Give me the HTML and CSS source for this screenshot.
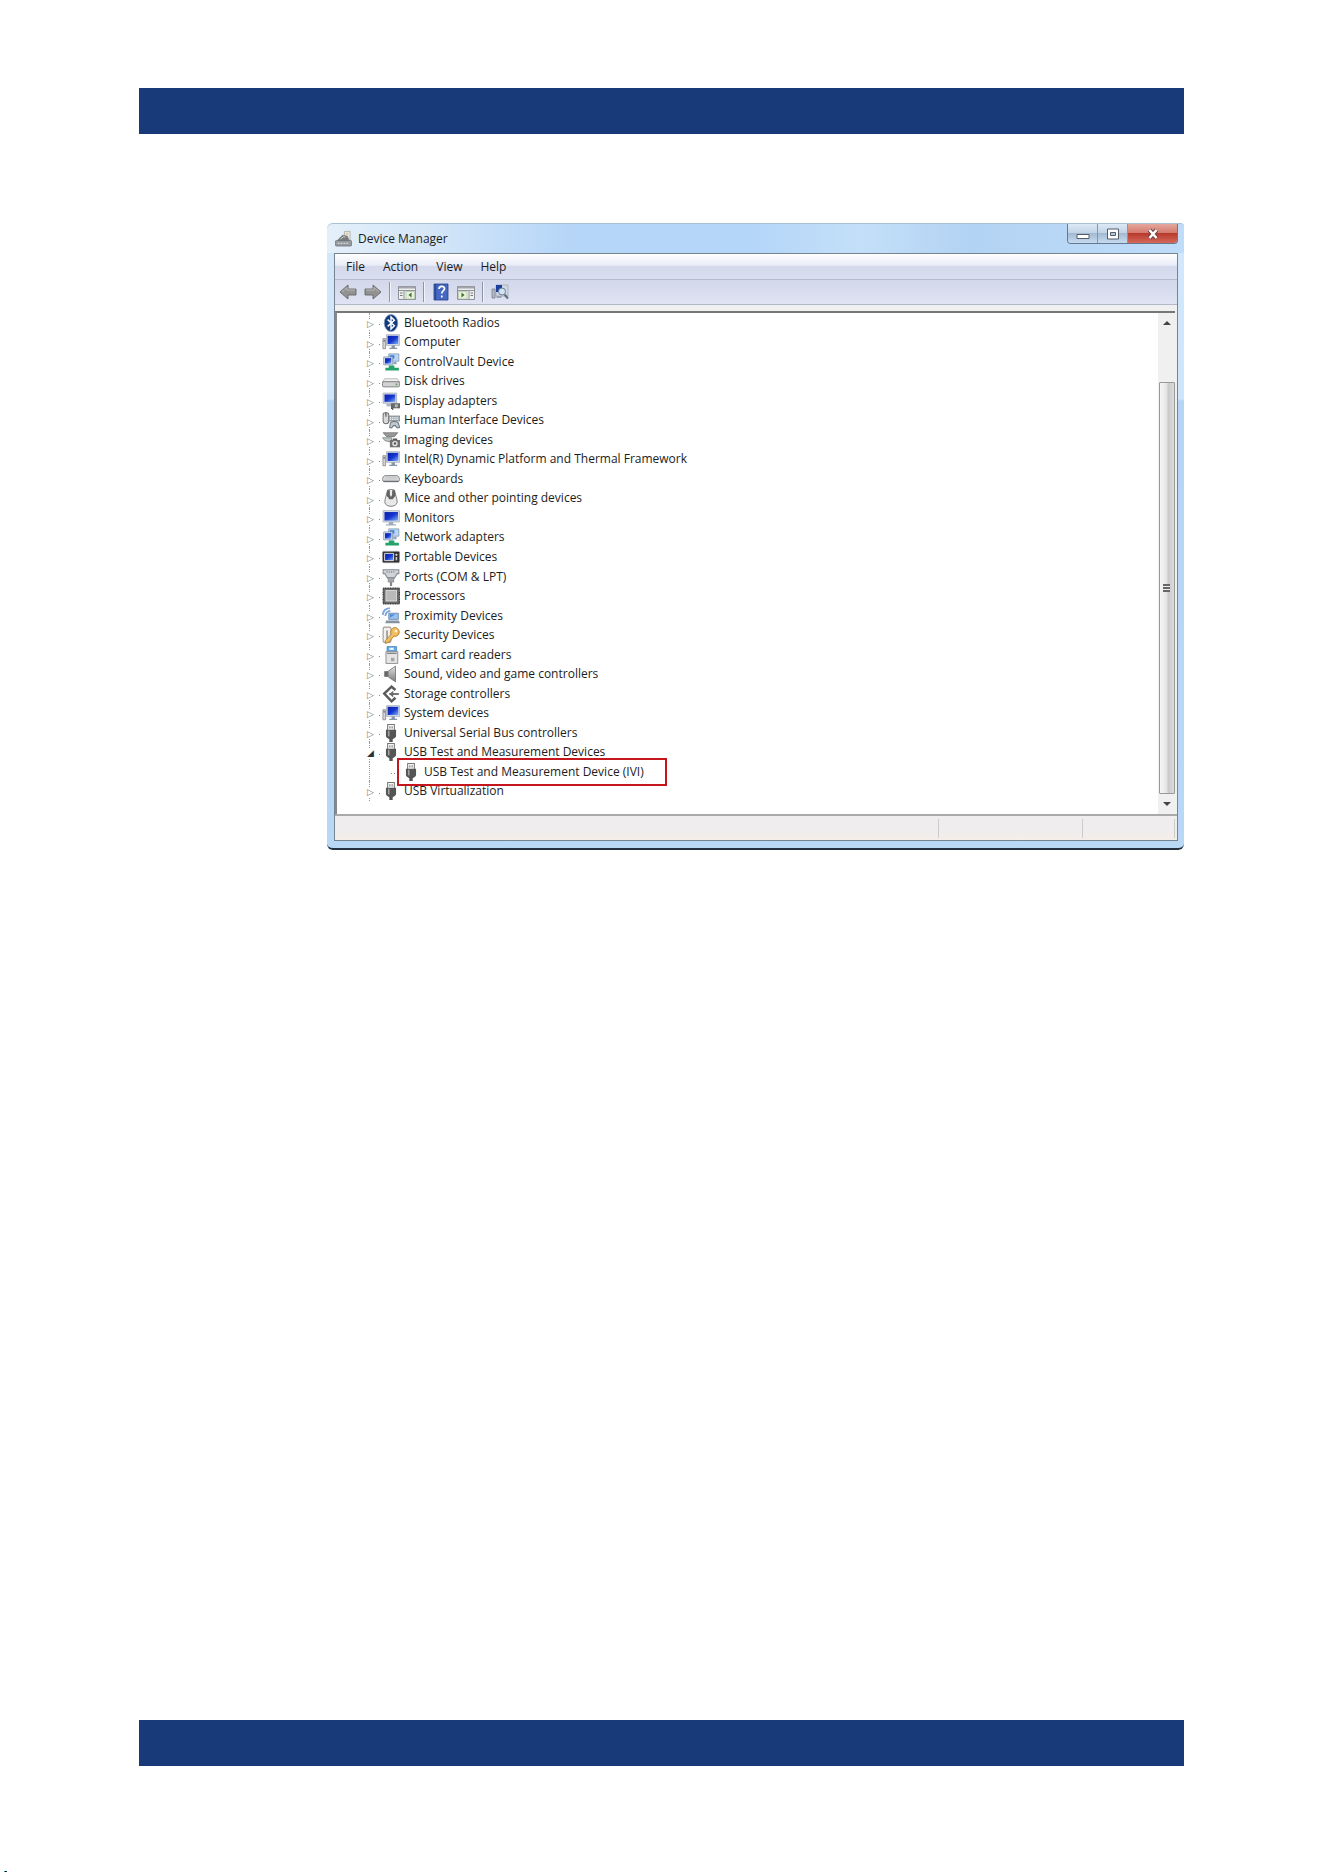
FILE: index.html
```html
<!DOCTYPE html>
<html lang="en">
  <head>
    <meta charset="UTF-8" />
    <meta name="viewport" content="width=device-width, initial-scale=1.0" />
    <title>Device Manager</title>
    <link rel="stylesheet" href="styles.css">
  </head>
  <body>
    <!-- Icon set -->
    <svg class="icon-set" aria-hidden="true">
      <defs>
        <linearGradient id="blueScreen" x1="0" y1="0" x2="1" y2="1">
          <stop offset="0" stop-color="#0a1fa8" />
          <stop offset="0.5" stop-color="#1534cf" />
          <stop offset="1" stop-color="#7fb2f2" />
        </linearGradient>
        <linearGradient id="grey" x1="0" y1="0" x2="0" y2="1">
          <stop offset="0" stop-color="#e0e0e0" />
          <stop offset="1" stop-color="#7c7c7c" />
        </linearGradient>
      </defs>
      <symbol id="bluetooth" viewBox="0 0 16 16">
        <ellipse cx="8" cy="8" rx="6" ry="7.6" fill="#123a80" stroke="#7d93b8" stroke-width="0.6" />
        <path d="M5 5l6 5.5L8 13.4V2.6l3 2.9L5 11" fill="none" stroke="#fff" stroke-width="1.3" />
      </symbol>
      <symbol id="computer" viewBox="0 0 16 16">
        <path d="M0.8 5h2.4v9H0.8z" fill="#d4d4d4" stroke="#777" stroke-width="0.6" />
        <path d="M1.3 7h1.4" stroke="#555" />
        <path d="M4 1.5h11.5v9.5H4z" fill="#d7dde6" stroke="#a4adba" stroke-width="0.7" />
        <path d="M5 2.5h9.5v7.3H5z" fill="url(#blueScreen)" />
        <path d="M8.5 11h3v2h2v1.2H6.5V13h2z" fill="#8796a8" />
      </symbol>
      <symbol id="network" viewBox="0 0 16 16">
        <path d="M6 0.8h9v6.5H6z" fill="#b9d7f4" stroke="#8095ac" stroke-width="0.7" />
        <path d="M7 2h4v3H7z" fill="#3b7fd8" />
        <path d="M1.5 3.5h8v7h-8z" fill="#d4e2f1" stroke="#8093ab" stroke-width="0.7" />
        <path d="M2.7 4.6h5.6v4.8H2.7z" fill="url(#blueScreen)" />
        <path d="M10 8h3v2h-3z" fill="#91a4b8" />
        <path d="M6 11h5v2h4v2.5H3V13h3z" fill="#25a267" />
      </symbol>
      <symbol id="disk" viewBox="0 0 16 16">
        <path d="M2.5 6h11l2.3 3H0.2z" fill="#f2f2f2" stroke="#9b9b9b" stroke-width="0.6" />
        <rect x="0.4" y="8.6" width="15.3" height="4.6" rx="1.4" fill="#d2d2d2" stroke="#777" stroke-width="0.8" />
        <path d="M12 10.2h1.8v1.6H12z" fill="#6ea56a" />
      </symbol>
      <symbol id="display" viewBox="0 0 16 16">
        <path d="M1 1h12v9H1z" fill="#d7dde6" stroke="#9ba6b5" stroke-width="0.7" />
        <path d="M2.2 2.2h9.6v6.6H2.2z" fill="url(#blueScreen)" />
        <path d="M4 10.5h5v2.3H4z" fill="#a9b5c4" />
        <path d="M8 10h8v4.5H8z" fill="#666b66" />
        <circle cx="12.7" cy="12.2" r="1.5" fill="#b5b8b5" />
        <path d="M8 14.5h1.5V16" stroke="#555" fill="none" />
      </symbol>
      <symbol id="hid" viewBox="0 0 16 16">
        <path d="M1 3c0-2 5-2 5 0v6c0 3-5 3-5 0z" fill="#d9d9d9" stroke="#6e6e6e" stroke-width="0.9" />
        <path d="M3.5 1v4" stroke="#555" />
        <path d="M6 4.5h10v4.3H6z" fill="#aeb7bf" stroke="#777" stroke-width="0.7" />
        <path d="M7 6h8M7 7.5h8" stroke="#f4f4f4" stroke-dasharray="1 1" />
        <path d="M7.5 10.5c1.5-1.5 5.5-1.5 7 0l1.2 4.2-2.2.3-1.7-2h-1.6l-1.6 2-1.8-.3z" fill="#c1c8ce" stroke="#697783" stroke-width="0.9" />
      </symbol>
      <symbol id="imaging" viewBox="0 0 16 16">
        <path d="M1 1.5h13L11 5H4z" fill="#989898" stroke="#676767" stroke-width="0.6" />
        <path d="M0.5 6h8v4L2.6 8.6z" fill="#c1c8c8" stroke="#7b8181" stroke-width="0.7" />
        <path d="M7 8h9v6.5H7z" fill="#727272" />
        <path d="M9.5 6.7h4V8h-4z" fill="#555" />
        <circle cx="11.5" cy="11.2" r="2.4" fill="#e7e7e7" />
        <circle cx="11.5" cy="11.2" r="1.1" fill="#555" />
      </symbol>
      <symbol id="keyboard" viewBox="0 0 16 16">
        <path d="M2.7 5h10.6c1 0 2.2 1.8 2.2 3.4 0 1.2-.6 2-1.5 2H2c-.9 0-1.5-.8-1.5-2C.5 6.8 1.7 5 2.7 5z" fill="#dedede" stroke="#76797c" stroke-width="0.8" />
        <path d="M3 6.5h10M2.3 8h11.4" stroke="#b9bdc2" stroke-width="0.7" />
        <path d="M1.2 10h13.6" stroke="#63676b" />
      </symbol>
      <symbol id="mouse" viewBox="0 0 16 16">
        <path d="M5 1c1.5-1 4.5-1 6 0 .5 3 2.5 7 2.5 11-1 4.500-10 4.500-11 0C2.500 8 4.500 4 5 1z" fill="#e8e8e8" stroke="#777" stroke-width="0.8" />
        <path d="M4.500 1h2.500v4l1 2 1-2V1h2.500l.5 5-2.500 3H6.500L4 6z" fill="#636363" />
        <path d="M8 1.500v4M5 7.500l-1 4" stroke="#eee" stroke-width="1.3" />
      </symbol>
      <symbol id="monitor" viewBox="0 0 16 16">
        <path d="M1 1.5h14.5v10H1z" fill="#d7dde6" stroke="#a4adba" stroke-width="0.7" />
        <path d="M2.2 2.7h12v7.6h-12z" fill="url(#blueScreen)" />
        <path d="M6 11.5h4v2h2.5v1.2h-9v-1.2H6z" fill="#a0acba" />
      </symbol>
      <symbol id="portable" viewBox="0 0 16 16">
        <rect x="0.5" y="3" width="15" height="10" rx="1" fill="#303030" stroke="#8c8c8c" stroke-width="0.7" />
        <path d="M2.3 4.8h8v6.4h-8z" fill="url(#blueScreen)" stroke="#e5e5e5" stroke-width="0.8" />
        <circle cx="12.8" cy="6" r="1" fill="#ddd" />
        <path d="M12.8 8v3" stroke="#c8c8c8" stroke-width="1.5" />
      </symbol>
      <symbol id="port" viewBox="0 0 16 16">
        <path d="M1 1.5h14v3.5h-1.5L11 9H5L2.5 5H1z" fill="#d0d4d8" stroke="#83888e" stroke-width="0.9" />
        <path d="M4 3.5h8" stroke="#666" stroke-dasharray="1 1" />
        <path d="M5.5 8.5h5v4h-5z" fill="#a4a8ad" stroke="#777" stroke-width="0.5" />
        <path d="M8 12.5V16" stroke="#888" stroke-width="2" />
      </symbol>
      <symbol id="processor" viewBox="0 0 16 16">
        <rect x="1" y="1" width="14.5" height="14" fill="#696969" stroke="#333" stroke-dasharray="1 .5" />
        <rect x="3.5" y="3" width="9.5" height="9.5" fill="#b9b9b9" stroke="#e4e4e4" stroke-width="0.7" />
      </symbol>
      <symbol id="proximity" viewBox="0 0 16 16">
        <path d="M.8 7C1 3.5 3.5 1.2 7 1M3 8c.2-2.600 1.800-4.200 4.400-4.500" fill="none" stroke="#7ba5dc" stroke-width="1.6" />
        <path d="M6 5.5h8.5V11H6z" fill="#98c1ef" stroke="#718aaa" stroke-width="0.8" />
        <path d="M7 6.5h5L7 9.5z" fill="#4c8ade" />
        <path d="M3.5 12H15l1 2.5H3z" fill="#8793a1" />
      </symbol>
      <symbol id="security" viewBox="0 0 16 16">
        <rect x="1" y="1" width="7" height="13.5" rx="1.5" fill="#f4f1ed" stroke="#a59c92" />
        <path d="M4.5 4v8" stroke="#999" stroke-width="1.5" />
        <path d="M9.5 2c3-2 7 1.500 5.500 5-.8 2-3 2.500-4.500 2L6 14.500 3 15.500V13L8 7.500C7.500 5 8 3 9.500 2z" fill="#f1bf62" stroke="#b57a26" stroke-width="0.8" />
        <circle cx="12.5" cy="4.5" r="1.2" fill="#fff4da" />
      </symbol>
      <symbol id="smartcard" viewBox="0 0 16 16">
        <path d="M4.5.5H13v6H4.500z" fill="#5fa7e2" stroke="#4a83b8" stroke-width="0.7" />
        <path d="M6.5 1.5h4v2h-4z" fill="#e5f3ff" />
        <path d="M3.5 5H14v10.5H3.500z" fill="#e5e5e5" stroke="#898989" stroke-width="0.8" />
        <path d="M8 10.5h3v3H8z" fill="#a5a5a5" />
        <path d="M4.5 6.5H13" stroke="#777" />
      </symbol>
      <symbol id="sound" viewBox="0 0 16 16">
        <path d="M2 5.5h3.5v5H2z" fill="#686868" />
        <path d="M5.5 5.5L12 1v14l-6.500-4.500z" fill="url(#grey)" stroke="#7b7b7b" stroke-width="0.8" />
      </symbol>
      <symbol id="storage" viewBox="0 0 16 16">
        <path d="M12 4.5L8.5 1.5 2 7.7 8.5 14.5l3.500-3.200" fill="none" stroke="#5b5b5b" stroke-width="2.2" />
        <path d="M6.5 8H15" stroke="#777" stroke-width="1.8" />
        <path d="M10 5L6.5 8 10 11z" fill="#696969" />
      </symbol>
      <symbol id="usb" viewBox="0 0 16 16">
        <path d="M5 .5h6V6H5z" fill="#f6f6f6" stroke="#777" stroke-width="0.9" />
        <path d="M7 2v2M9 2v2" stroke="#666" stroke-width="0.8" />
        <path d="M3.500 5h9v5.500c0 1.500-1.500 2.500-3 3V16h-3v-2.500c-1.500-.5-3-1.500-3-3z" fill="#555" />
        <path d="M6 6v5" stroke="#a2a2a2" stroke-width="1.400" />
      </symbol>
      <symbol id="manager" viewBox="0 0 18 18">
        <path d="M10 1h6v11h-6z" fill="#e6e6df" stroke="#a9a9a0" stroke-width="0.8" />
        <circle cx="12.8" cy="3.5" r="1.2" fill="#d9c88a" />
        <path d="M4 9l4-4 5 1 2 5H3z" fill="#7c7c7c" stroke="#5f5f5f" stroke-width="0.6" />
        <path d="M6 9l3-2.5 2 .5" fill="none" stroke="#d8d8d8" />
        <rect x="0.5" y="10.5" width="17" height="6" rx="1" fill="#969ba0" stroke="#676b70" stroke-width="0.7" />
        <path d="M3 13.5h12" stroke="#e4e4e4" stroke-dasharray="2 1" />
      </symbol>
      <symbol id="arrow" viewBox="0 0 18 18">
        <path d="M1 9l8-7v4h8v6H9v4z" fill="#929292" stroke="#686868" stroke-width="0.9" />
        <path d="M3 9l5-4.500V7h8" fill="none" stroke="#b9b9b9" />
      </symbol>
      <symbol id="pane" viewBox="0 0 18 18">
        <path d="M.5 3.5h17v13H.5z" fill="#eef0f0" stroke="#8e9197" />
        <path d="M1 4.5h16" stroke="#a3a5ab" stroke-width="2" />
        <path d="M1 7.5h16M6 8v8" stroke="#8e9197" />
        <path d="M2 10h2.5M2 12.5h2.5" stroke="#777" />
        <path d="M8 8.5h8.5V16H8z" fill="#e4f2d7" stroke="#a9b79f" stroke-width="0.6" />
        <path d="M13.5 9.5v5L10.5 12z" fill="#416b35" />
      </symbol>
      <symbol id="help" viewBox="0 0 18 18">
        <path d="M2 1h14v16H2z" fill="#4569c2" stroke="#263d86" stroke-width="0.8" />
        <path d="M3.5 1v16" stroke="#2d489b" stroke-width="1.5" />
        <path d="M7 6c0-3.500 5.500-3.500 5.500-.3 0 2-2.700 2-2.700 4.800M9.800 12.500v2" fill="none" stroke="#fff" stroke-width="1.7" />
      </symbol>
      <symbol id="scan" viewBox="0 0 18 18">
        <path d="M5 2h12v11H5z" fill="#d2d8e2" stroke="#a2a8b4" stroke-width="0.8" />
        <path d="M5 2h6v7H5z" fill="#1b3e9c" />
        <path d="M1 6h3v9H1z" fill="#b5bbc5" stroke="#777f8b" stroke-width="0.8" />
        <circle cx="11" cy="8.5" r="3.5" fill="#cfe2f3" stroke="#6e7f95" />
        <path d="M13.5 11.5l3.5 4" stroke="#66707d" stroke-width="2.2" />
        <path d="M5.5 14h5" stroke="#8992a0" stroke-width="1.5" />
      </symbol>
    </svg>

    <header class="band"></header>

    <main class="window">
      <div class="titlebar">
        <svg class="title-icon"><use href="#manager" /></svg>
        <h1>Device Manager</h1>
        <div class="window-buttons">
          <button class="minimize" aria-label="Minimize"><svg viewBox="0 0 14 14"><path d="M1 7.500h12v4H1z" fill="#fff" stroke="#555c68" /></svg></button>
          <button class="maximize" aria-label="Maximize"><svg viewBox="0 0 14 14"><path d="M1.500 2h11v10h-11z" fill="#fff" stroke="#555c68" /><path d="M4.500 5.500h5v3h-5z" fill="#b6c8de" stroke="#555c68" /></svg></button>
          <button class="close" aria-label="Close"><svg viewBox="0 0 14 14"><path d="M3.500 3l7 8M10.500 3l-7 8" stroke="#6d4446" stroke-width="4.500" /><path d="M3.500 3l7 8M10.500 3l-7 8" stroke="#fff" stroke-width="2.500" /></svg></button>
        </div>
      </div>

      <div class="content">
        <nav class="menu">
          <button>File</button>
          <button>Action</button>
          <button>View</button>
          <button>Help</button>
        </nav>
        <div class="toolbar">
          <button aria-label="Back"><svg><use href="#arrow" /></svg></button>
          <button class="flip" aria-label="Forward"><svg><use href="#arrow" /></svg></button>
          <span class="separator"></span>
          <button aria-label="Show console tree"><svg><use href="#pane" /></svg></button>
          <span class="separator"></span>
          <button aria-label="Help"><svg><use href="#help" /></svg></button>
          <button class="flip" aria-label="Show action pane"><svg><use href="#pane" /></svg></button>
          <span class="separator"></span>
          <button aria-label="Scan for hardware changes"><svg><use href="#scan" /></svg></button>
        </div>

        <div class="panel">
          <ul class="tree">
            <li><svg class="icon"><use href="#bluetooth" /></svg>Bluetooth Radios</li>
            <li><svg class="icon"><use href="#computer" /></svg>Computer</li>
            <li><svg class="icon"><use href="#network" /></svg>ControlVault Device</li>
            <li><svg class="icon"><use href="#disk" /></svg>Disk drives</li>
            <li><svg class="icon"><use href="#display" /></svg>Display adapters</li>
            <li><svg class="icon"><use href="#hid" /></svg>Human Interface Devices</li>
            <li><svg class="icon"><use href="#imaging" /></svg>Imaging devices</li>
            <li><svg class="icon"><use href="#computer" /></svg>Intel(R) Dynamic Platform and Thermal Framework</li>
            <li><svg class="icon"><use href="#keyboard" /></svg>Keyboards</li>
            <li><svg class="icon"><use href="#mouse" /></svg>Mice and other pointing devices</li>
            <li><svg class="icon"><use href="#monitor" /></svg>Monitors</li>
            <li><svg class="icon"><use href="#network" /></svg>Network adapters</li>
            <li><svg class="icon"><use href="#portable" /></svg>Portable Devices</li>
            <li><svg class="icon"><use href="#port" /></svg>Ports (COM &amp; LPT)</li>
            <li><svg class="icon"><use href="#processor" /></svg>Processors</li>
            <li><svg class="icon"><use href="#proximity" /></svg>Proximity Devices</li>
            <li><svg class="icon"><use href="#security" /></svg>Security Devices</li>
            <li><svg class="icon"><use href="#smartcard" /></svg>Smart card readers</li>
            <li><svg class="icon"><use href="#sound" /></svg>Sound, video and game controllers</li>
            <li><svg class="icon"><use href="#storage" /></svg>Storage controllers</li>
            <li><svg class="icon"><use href="#computer" /></svg>System devices</li>
            <li><svg class="icon"><use href="#usb" /></svg>Universal Serial Bus controllers</li>
            <li class="open"><svg class="icon"><use href="#usb" /></svg>USB Test and Measurement Devices</li>
            <li class="child"><span class="marked"><svg class="icon"><use href="#usb" /></svg>USB Test and Measurement Device (IVI)</span></li>
            <li><svg class="icon"><use href="#usb" /></svg>USB Virtualization</li>
          </ul>
          <div class="scrollbar">
            <button class="up" aria-label="Scroll up"></button>
            <div class="thumb"><span class="grip"></span></div>
            <button class="down" aria-label="Scroll down"></button>
          </div>
        </div>

        <div class="status">
          <span class="cell-main"></span>
          <span class="cell-mid"></span>
          <span class="cell-end"></span>
        </div>
      </div>
    </main>

    <footer class="band"></footer>
    <span class="page-mark"></span>
  </body>
</html>
```

FILE: styles.css
```css
/* General styles */
*,
*::before,
*::after {
  box-sizing: border-box;
}

body {
  font-family: "Open Sans", "Noto Sans", sans-serif;
  font-size: 12px;
  line-height: 18px;
  color: #1c1c1c;
  background-color: #fff;
  margin: 0;
  padding: 88px 140px 106px 139px;
  min-height: 100vh;
  display: flex;
  flex-direction: column;
  position: relative;
}

button {
  font: inherit;
  color: inherit;
  background: none;
  border: none;
  padding: 0;
  display: flex;
  align-items: center;
  justify-content: center;
}

.icon-set {
  position: absolute;
  width: 0;
  height: 0;
}

.band {
  height: 46px;
  flex: none;
  background-color: #183a78;
}

footer.band {
  margin-top: auto;
}

/* small print mark on the sheet edge */
.page-mark {
  position: absolute;
  left: 4px;
  bottom: 0;
  width: 3px;
  height: 1px;
  background: linear-gradient(90deg, #2a9a70 33%, #000 33% 66%, #1a1a80 66%);
}

/* Window frame */
.window {
  margin: 89px 0 0 188px;
  padding: 0 6px 7px 7px;
  border-bottom: 2px solid #23303f;
  border-radius: 6px 4px 6px 6px;
  background: linear-gradient(#d3e8fb 0, #cfe5fb 176px, #b4d5f6 178px, #b9d8f6 100%);
}

.titlebar {
  height: 30px;
  margin: 0 -6px 0 -7px;
  padding: 0 6px 0 8px;
  display: flex;
  align-items: center;
  gap: 6px;
  border-top: 1px solid #a9bfd6;
  border-radius: 6px 4px 0 0;
  background: linear-gradient(90deg, #e4eff9 0, #d4e6f8 12%, #b6d6f8 28%, #b4d6f9 50%, #c4dff8 62%, #b3d3f4 75%, #bfddf9 100%);
}

.title-icon {
  width: 17px;
  height: 18px;
}

h1 {
  margin: 0;
  font-size: 12px;
  font-weight: normal;
}

.window-buttons {
  margin-left: auto;
  align-self: flex-start;
  display: flex;
  height: 20px;
  border: 1px solid #66788d;
  border-top: none;
  border-radius: 0 0 4px 4px;
  overflow: hidden;
}

.window-buttons button {
  width: 30px;
  border-right: 1px solid #8396aa;
  background: linear-gradient(#dce9f6 0, #c3d4e6 45%, #a4bad2 50%, #c5dbf0 100%);
}

.window-buttons svg {
  width: 14px;
  height: 14px;
}

.window-buttons .close {
  width: 49px;
  border-right: none;
  background: linear-gradient(#e5a79d 0, #d57c70 45%, #b83a2d 50%, #d5695a 100%);
}

.content {
  border: 1px solid #77838f;
  background-color: #f0f0f0;
}

.menu {
  height: 26px;
  padding-left: 11px;
  display: flex;
  gap: 18px;
  border-bottom: 1px solid #b5bccb;
  background: linear-gradient(#fff 0, #e9ecf7 45%, #d3d8eb 50%, #dadff0 100%);
}

/* Toolbar */
.toolbar {
  height: 25px;
  padding-left: 4px;
  display: flex;
  align-items: center;
  gap: 7px;
  border-bottom: 1px solid #b2b8c6;
  background: linear-gradient(#d2d8e9, #dfe3f4);
}

.toolbar svg {
  width: 18px;
  height: 18px;
}

.toolbar .separator {
  width: 2px;
  height: 20px;
  border-left: 1px solid #8c95a6;
  border-right: 1px solid #f2f4fa;
}

.flip svg {
  transform: scaleX(-1);
}

/* Device tree */
.panel {
  margin: 6px 2px 0 0;
  border-top: 2px solid #777;
  border-left: 2px solid #888;
  background-color: #fff;
  display: flex;
}

.tree {
  list-style: none;
  margin: 0;
  padding: 0 0 13px 32px;
  flex: 1;
  display: grid;
  grid-auto-rows: 1fr;
  height: 501px;
}

.tree li {
  display: flex;
  align-items: center;
  gap: 4px;
  position: relative;
  padding-left: 13px;
  white-space: nowrap;
}

.icon {
  width: 18px;
  height: 18px;
  flex: none;
}

/* dotted trunk and branch */
.tree li::after {
  content: "";
  position: absolute;
  left: 0;
  top: 0;
  bottom: 0;
  width: 13px;
  border-left: 1px dotted #999;
  background: linear-gradient(90deg, #888 50%, transparent 50%) 0 60% / 3px 1px repeat-x;
  background-clip: content-box;
  padding-left: 8px;
}

/* closed and open arrows */
.tree li::before {
  content: "▷";
  position: absolute;
  z-index: 1;
  left: -2px;
  top: 6px;
  width: 9px;
  height: 10px;
  font: 9px/10px "DejaVu Sans", sans-serif;
  color: #777;
  background-color: #fff;
}

.tree .open::before {
  content: "◢";
  color: #333;
}

.tree .child {
  padding-left: 33px;
}

.tree .child::before {
  content: none;
}

.tree .child::after {
  width: 30px;
  padding-left: 21px;
}

.marked {
  display: flex;
  align-items: center;
  gap: 4px;
}

/* red frame around the installed device */
.marked::after {
  content: "";
  position: absolute;
  z-index: 2;
  top: -4px;
  left: 28px;
  width: 270px;
  height: 28px;
  border: 2px solid #c4161c;
}

/* Scrollbar */
.scrollbar {
  width: 17px;
  display: flex;
  flex-direction: column;
  align-items: center;
  background-color: #f0f0f0;
}

.scrollbar button {
  width: 17px;
  height: 20px;
}

.scrollbar .up::before,
.scrollbar .down::before {
  content: "";
  border: 4px solid transparent;
  border-top-width: 0;
  border-bottom: 4px solid #444;
}

.scrollbar .down::before {
  border-bottom: none;
  border-top: 4px solid #444;
}

.thumb {
  flex: 1;
  width: 16px;
  margin-top: 49px;
  border: 1px solid #999;
  border-radius: 1px;
  background: linear-gradient(90deg, #f6f6f6 0, #e6e6e6 45%, #cacaca 60%, #dcdcdc 100%);
  display: flex;
  align-items: center;
  justify-content: center;
}

.grip {
  width: 7px;
  height: 8px;
  background: repeating-linear-gradient(#666 0 2px, #eee 2px 3px);
}

/* Status bar */
.status {
  height: 26px;
  padding: 3px 2px 2px 0;
  border-top: 2px solid #aaa;
  display: flex;
  background: linear-gradient(#efeded 60%, #f4eee9);
}

.status span {
  border-right: 1px solid #ccc;
}

.cell-main {
  flex: 1;
}

.cell-mid {
  width: 144px;
}

.cell-end {
  width: 92px;
}
```
